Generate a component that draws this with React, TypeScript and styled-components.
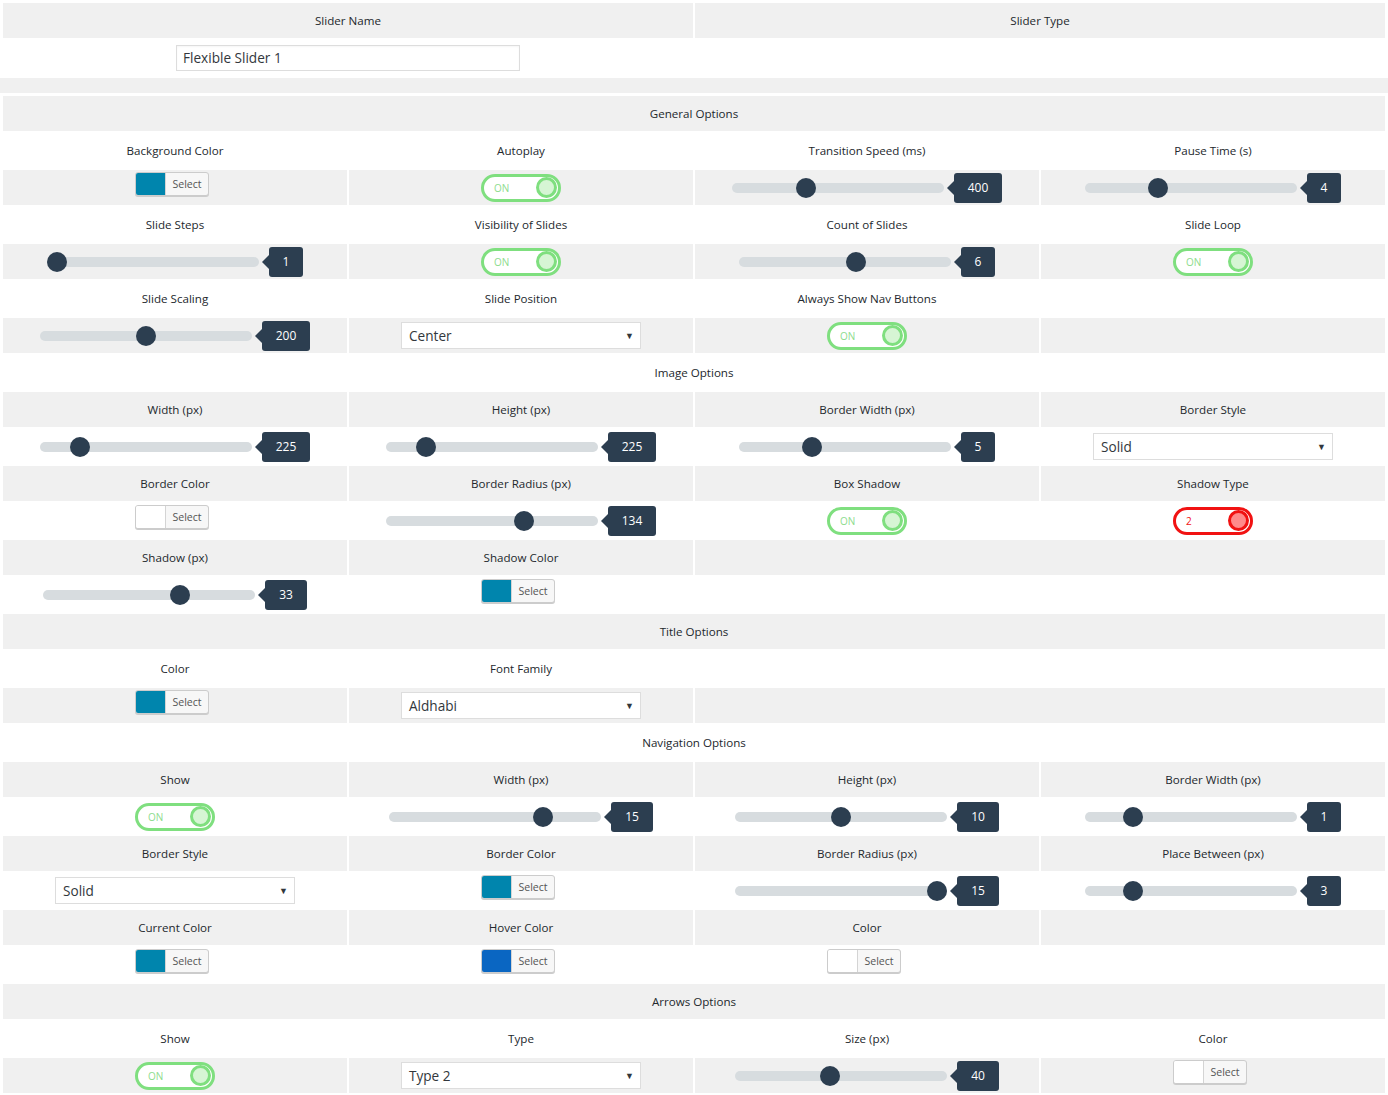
import React from "react";
import styled, { createGlobalStyle, css } from "styled-components";

const GlobalStyle = createGlobalStyle`
  html, body {
    margin: 0;
    padding: 0;
    background: #ffffff;
  }
  body {
    font-family: "Open Sans", "Noto Sans", Arial, sans-serif;
    font-size: 12px;
    color: #23282d;
  }
  * { box-sizing: border-box; }
`;

const GRAY = "#f0f0f0";
const GREEN = "#7fdf7f";

const Page = styled.div`
  padding: 1px 1px 0 1px;
  width: 1388px;
`;

const TableBox = styled.div`
  display: flex;
  flex-direction: column;
  gap: 2px;
  padding: 2px;
`;

const Row = styled.div<{ $cols: number }>`
  display: grid;
  grid-template-columns: repeat(${(p) => p.$cols}, 1fr);
  gap: 2px;
  height: 35px;
`;

const Cell = styled.div<{ $gray: boolean; $span?: number }>`
  background: ${(p) => (p.$gray ? GRAY : "#ffffff")};
  display: flex;
  align-items: center;
  justify-content: center;
  min-width: 0;
  ${(p) => p.$span && css`grid-column: span ${p.$span};`}
`;

const Label = styled.span`
  font-size: 11.6px;
  line-height: 16px;
  color: #23282d;
`;

const Band = styled.div`
  height: 15px;
  background: ${GRAY};
  margin: 1px -1px;
`;

const TextInput = styled.div`
  width: 344px;
  height: 26px;
  border: 1px solid #dddddd;
  box-shadow: inset 0 1px 2px rgba(0, 0, 0, 0.04);
  background: #fff;
  padding: 0 6px;
  display: flex;
  align-items: center;
  font-size: 13.6px;
  color: #32373c;
`;

/* color picker */
const ColorButton = styled.div`
  display: flex;
  height: 24px;
  width: 74px;
  margin: 0 6px 7px 0;
  border: 1px solid #cccccc;
  border-radius: 3px;
  background: #f7f7f7;
  box-shadow: 0 1px 0 #cccccc;
  overflow: hidden;
`;

const Swatch = styled.span<{ $color: string }>`
  width: 30px;
  flex: none;
  background: ${(p) => p.$color};
  border-right: 1px solid #d4d4d4;
`;

const SwatchText = styled.span`
  flex: 1;
  display: flex;
  align-items: center;
  justify-content: center;
  font-size: 10.6px;
  color: #555555;
`;

/* toggle */
const ToggleBox = styled.div<{ $red?: boolean }>`
  width: 80px;
  height: 28px;
  border: 3px solid ${(p) => (p.$red ? "#f11212" : GREEN)};
  border-radius: 14px;
  background: #fff;
  display: flex;
  align-items: center;
  justify-content: space-between;
  padding: 0 1px 0 10px;
`;

const ToggleText = styled.span<{ $red?: boolean }>`
  font-size: 10px;
  color: ${(p) => (p.$red ? "#f11212" : "#8ddc8d")};
  padding-top: 1px;
`;

const Knob = styled.span<{ $red?: boolean }>`
  width: 21px;
  height: 21px;
  border-radius: 50%;
  border: 3px solid ${(p) => (p.$red ? "#f11212" : GREEN)};
  background: ${(p) => (p.$red ? "#ff8a8a" : "#d6f5d4")};
`;

/* slider */
const SliderGroup = styled.div`
  display: flex;
  align-items: center;
`;

const Track = styled.div`
  position: relative;
  width: 212px;
  height: 10px;
  border-radius: 5px;
  background: #d7dcdf;
`;

const Thumb = styled.span`
  position: absolute;
  top: -5px;
  width: 20px;
  height: 20px;
  border-radius: 50%;
  background: #2c3e50;
`;

const Badge = styled.span`
  position: relative;
  margin-left: 10px;
  height: 30px;
  padding: 0 14px;
  border-radius: 3px;
  background: #2c3e50;
  color: #ffffff;
  font-size: 12px;
  line-height: 30px;
  text-align: center;
  &::after {
    content: "";
    position: absolute;
    top: 8px;
    left: -7px;
    border-top: 7px solid transparent;
    border-bottom: 7px solid transparent;
    border-right: 7px solid #2c3e50;
  }
`;

/* select */
const SelectBox = styled.div`
  width: 240px;
  height: 27px;
  border: 1px solid #dddddd;
  background: #ffffff;
  display: flex;
  align-items: center;
  justify-content: space-between;
  padding: 0 6px 0 7px;
  font-size: 13.6px;
  color: #32373c;
`;

const Caret = styled.span`
  font-size: 9px;
  color: #32373c;
`;

type Ctl =
  | { k: "color"; c: string }
  | { k: "toggle"; t?: string; red?: boolean }
  | { k: "slider"; f: number; v: string }
  | { k: "select"; v: string }
  | { k: "empty"; span?: number };

type Line =
  | { type: "section"; title: string }
  | { type: "labels"; items: (string | { span: number })[] }
  | { type: "controls"; items: Ctl[] };

const BLUE = "#0085ad";
const WHITE = "#ffffff";

const lines: Line[] = [
  { type: "section", title: "General Options" },
  { type: "labels", items: ["Background Color", "Autoplay", "Transition Speed (ms)", "Pause Time (s)"] },
  {
    type: "controls",
    items: [
      { k: "color", c: BLUE },
      { k: "toggle" },
      { k: "slider", f: 0.333, v: "400" },
      { k: "slider", f: 0.333, v: "4" },
    ],
  },
  { type: "labels", items: ["Slide Steps", "Visibility of Slides", "Count of Slides", "Slide Loop"] },
  {
    type: "controls",
    items: [
      { k: "slider", f: 0, v: "1" },
      { k: "toggle" },
      { k: "slider", f: 0.557, v: "6" },
      { k: "toggle" },
    ],
  },
  { type: "labels", items: ["Slide Scaling", "Slide Position", "Always Show Nav Buttons", ""] },
  {
    type: "controls",
    items: [
      { k: "slider", f: 0.5, v: "200" },
      { k: "select", v: "Center" },
      { k: "toggle" },
      { k: "empty" },
    ],
  },
  { type: "section", title: "Image Options" },
  { type: "labels", items: ["Width (px)", "Height (px)", "Border Width (px)", "Border Style"] },
  {
    type: "controls",
    items: [
      { k: "slider", f: 0.156, v: "225" },
      { k: "slider", f: 0.156, v: "225" },
      { k: "slider", f: 0.333, v: "5" },
      { k: "select", v: "Solid" },
    ],
  },
  { type: "labels", items: ["Border Color", "Border Radius (px)", "Box Shadow", "Shadow Type"] },
  {
    type: "controls",
    items: [
      { k: "color", c: WHITE },
      { k: "slider", f: 0.667, v: "134" },
      { k: "toggle" },
      { k: "toggle", t: "2", red: true },
    ],
  },
  { type: "labels", items: ["Shadow (px)", "Shadow Color", { span: 2 }] },
  {
    type: "controls",
    items: [
      { k: "slider", f: 0.66, v: "33" },
      { k: "color", c: BLUE },
      { k: "empty", span: 2 },
    ],
  },
  { type: "section", title: "Title Options" },
  { type: "labels", items: ["Color", "Font Family", { span: 2 }] },
  {
    type: "controls",
    items: [
      { k: "color", c: BLUE },
      { k: "select", v: "Aldhabi" },
      { k: "empty", span: 2 },
    ],
  },
  { type: "section", title: "Navigation Options" },
  { type: "labels", items: ["Show", "Width (px)", "Height (px)", "Border Width (px)"] },
  {
    type: "controls",
    items: [
      { k: "toggle" },
      { k: "slider", f: 0.75, v: "15" },
      { k: "slider", f: 0.5, v: "10" },
      { k: "slider", f: 0.2, v: "1" },
    ],
  },
  { type: "labels", items: ["Border Style", "Border Color", "Border Radius (px)", "Place Between (px)"] },
  {
    type: "controls",
    items: [
      { k: "select", v: "Solid" },
      { k: "color", c: BLUE },
      { k: "slider", f: 1, v: "15" },
      { k: "slider", f: 0.2, v: "3" },
    ],
  },
  { type: "labels", items: ["Current Color", "Hover Color", "Color", ""] },
  {
    type: "controls",
    items: [
      { k: "color", c: BLUE },
      { k: "color", c: "#0a66c2" },
      { k: "color", c: WHITE },
      { k: "empty" },
    ],
  },
  { type: "section", title: "Arrows Options" },
  { type: "labels", items: ["Show", "Type", "Size (px)", "Color"] },
  {
    type: "controls",
    items: [
      { k: "toggle" },
      { k: "select", v: "Type 2" },
      { k: "slider", f: 0.44, v: "40" },
      { k: "color", c: WHITE },
    ],
  },
];

function ColorPicker({ color }: { color: string }) {
  return (
    <ColorButton>
      <Swatch $color={color} />
      <SwatchText>Select</SwatchText>
    </ColorButton>
  );
}

function Toggle({ text = "ON", red }: { text?: string; red?: boolean }) {
  return (
    <ToggleBox $red={red}>
      <ToggleText $red={red}>{text}</ToggleText>
      <Knob $red={red} />
    </ToggleBox>
  );
}

function Slider({ frac, value }: { frac: number; value: string }) {
  return (
    <SliderGroup>
      <Track>
        <Thumb style={{ left: `${frac * 192}px` }} />
      </Track>
      <Badge>{value}</Badge>
    </SliderGroup>
  );
}

function Select({ value }: { value: string }) {
  return (
    <SelectBox>
      <span>{value}</span>
      <Caret>▼</Caret>
    </SelectBox>
  );
}

function renderCtl(c: Ctl) {
  switch (c.k) {
    case "color":
      return <ColorPicker color={c.c} />;
    case "toggle":
      return <Toggle text={c.t} red={c.red} />;
    case "slider":
      return <Slider frac={c.f} value={c.v} />;
    case "select":
      return <Select value={c.v} />;
    default:
      return null;
  }
}

export default function App() {
  return (
    <Page>
      <GlobalStyle />
      <TableBox>
        <Row $cols={2}>
          <Cell $gray>
            <Label>Slider Name</Label>
          </Cell>
          <Cell $gray>
            <Label>Slider Type</Label>
          </Cell>
        </Row>
        <Row $cols={2}>
          <Cell $gray={false}>
            <TextInput>Flexible Slider 1</TextInput>
          </Cell>
          <Cell $gray={false} />
        </Row>
      </TableBox>
      <Band />
      <TableBox>
        {lines.map((line, i) => {
          const gray = i % 2 === 0;
          if (line.type === "section") {
            return (
              <Row $cols={1} key={i}>
                <Cell $gray={gray}>
                  <Label>{line.title}</Label>
                </Cell>
              </Row>
            );
          }
          if (line.type === "labels") {
            return (
              <Row $cols={4} key={i}>
                {line.items.map((it, j) =>
                  typeof it === "string" ? (
                    <Cell $gray={gray} key={j}>
                      <Label>{it}</Label>
                    </Cell>
                  ) : (
                    <Cell $gray={gray} $span={it.span} key={j} />
                  )
                )}
              </Row>
            );
          }
          return (
            <Row $cols={4} key={i}>
              {line.items.map((c, j) => (
                <Cell $gray={gray} $span={c.k === "empty" ? c.span : undefined} key={j}>
                  {renderCtl(c)}
                </Cell>
              ))}
            </Row>
          );
        })}
      </TableBox>
    </Page>
  );
}
